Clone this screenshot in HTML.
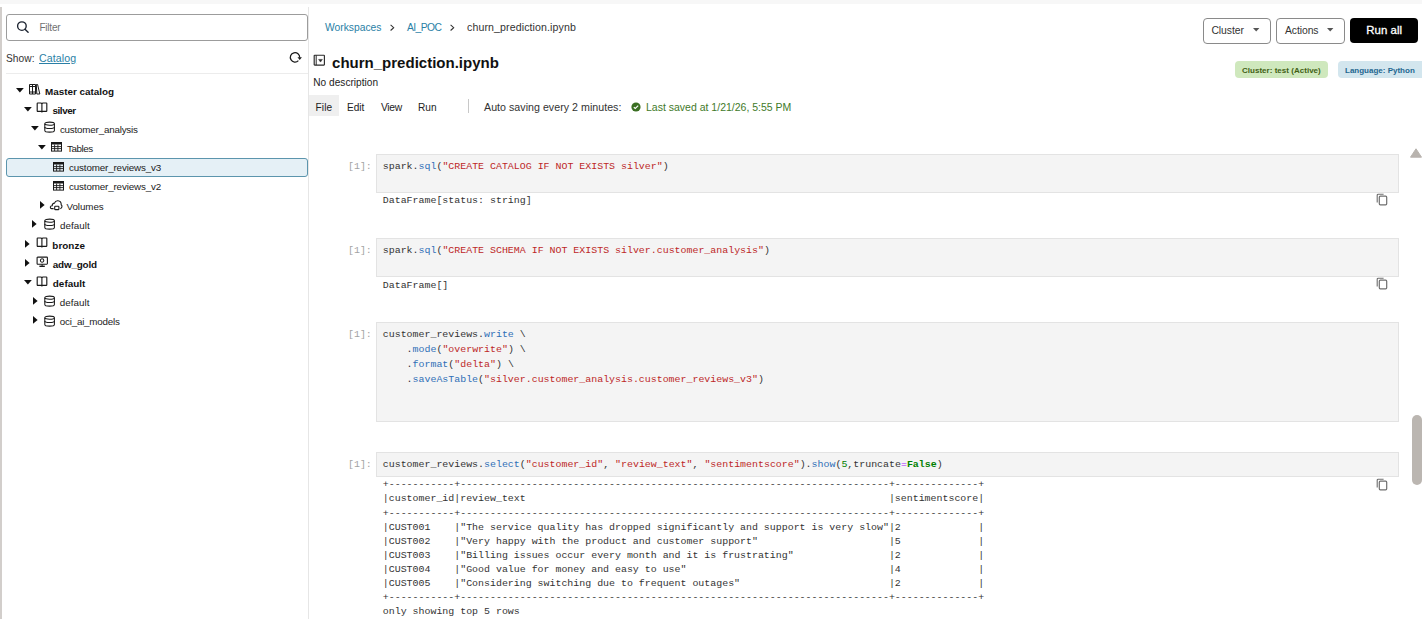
<!DOCTYPE html>
<html><head><meta charset="utf-8"><style>
html,body{margin:0;padding:0;background:#fff;width:1422px;height:627px;overflow:hidden;position:relative}
.t{position:absolute;font-family:"Liberation Sans",sans-serif;line-height:1;white-space:pre}
.m{position:absolute;font-family:"Liberation Mono",monospace;font-size:9.93px;white-space:pre;color:#333}
.s{color:#bd2727}
.f{color:#2f6fb7}
.p{color:#aa22ff}
.g{color:#008000}
.gb{color:#008000;font-weight:bold}
svg{display:block}
</style></head><body>
<div style="position:absolute;left:0;top:0;width:1422px;height:4px;background:#f7f7f7"></div>
<div style="position:absolute;left:0;top:7px;width:2px;height:612px;background:#d2cecb"></div>
<div style="position:absolute;left:308px;top:7px;width:1px;height:612px;background:#e6e6e6"></div>
<div style="position:absolute;left:6px;top:14px;width:300px;height:25px;border:1px solid #9c9c9c;border-radius:3px;box-sizing:content-box"></div>
<svg style="position:absolute;left:15px;top:20px" width="16" height="15" viewBox="0 0 16 15"><circle cx="6.9" cy="6.1" r="4.3" fill="none" stroke="#1c2330" stroke-width="1.35"/><path d="M10 9.3 L13.1 12.3" stroke="#1c2330" stroke-width="1.4" stroke-linecap="round"/></svg>
<div id="t0" class="t" style="left:39.40px;top:23.04px;font-size:10.000px;letter-spacing:-0.204px;color:#707070;font-weight:normal;">Filter</div>
<div id="t1" class="t" style="left:6.00px;top:53.67px;font-size:10.200px;letter-spacing:0.066px;color:#333;font-weight:normal;">Show:</div>
<div id="t2" class="t" style="left:39.00px;top:53.33px;font-size:10.600px;letter-spacing:0.084px;color:#2a7fa6;font-weight:normal;text-decoration:underline;text-underline-offset:1px">Catalog</div>
<svg style="position:absolute;left:288px;top:50px" width="15" height="15" viewBox="0 0 15 15"><path d="M10.4 10.6A4.7 4.7 0 1 1 11.7 7.6" fill="none" stroke="#1a1a1a" stroke-width="1.25"/><path d="M9.5 7.2H13.9L11.7 10Z" fill="#1a1a1a"/></svg>
<div style="position:absolute;left:6px;top:73px;width:302px;height:1px;background:#ececec"></div>
<div style="position:absolute;left:6px;top:157.5px;width:300px;height:17px;border:1px solid #5c95ad;border-radius:3px;background:#e5f0f6"></div>
<svg style="position:absolute;left:16px;top:87.7px" width="8" height="5" viewBox="0 0 8 5"><path d="M0 0H7.8L3.9 4.5Z" fill="#111"/></svg>
<div style="position:absolute;left:29px;top:83px;line-height:0"><svg width="12" height="12" viewBox="0 0 12 12"><path d="M0.5 1.5H6.5V11H0.5Z M3.5 1.5V11 M0.5 3.5H6.5 M0.5 9H6.5" fill="none" stroke="#1a1a1a" stroke-width="1"/><path d="M7.3 1.5H8.6L10.8 11H7.8Z" fill="none" stroke="#1a1a1a" stroke-width="1" stroke-linejoin="round"/></svg></div>
<div id="t3" class="t" style="left:45.00px;top:86.62px;font-size:9.900px;letter-spacing:0.000px;color:#111;font-weight:bold;">Master catalog</div>
<svg style="position:absolute;left:24px;top:106.8px" width="8" height="5" viewBox="0 0 8 5"><path d="M0 0H7.8L3.9 4.5Z" fill="#111"/></svg>
<div style="position:absolute;left:35.6px;top:102.2px;line-height:0"><svg width="12" height="12" viewBox="0 0 12 12"><path d="M1.2 1.6Q1.2 1 1.8 1H4.6Q5.8 1 5.9 1.9Q6 1 7.2 1H10.2Q10.8 1 10.8 1.6V8.8Q10.8 9.4 10.2 9.4H1.8Q1.2 9.4 1.2 8.8Z" fill="none" stroke="#1a1a1a" stroke-width="1.15"/><path d="M5.9 1.9V10.6" stroke="#1a1a1a" stroke-width="1.15"/></svg></div>
<div id="t4" class="t" style="left:52.40px;top:105.72px;font-size:9.900px;letter-spacing:-0.408px;color:#111;font-weight:bold;">silver</div>
<svg style="position:absolute;left:31px;top:125.50000000000001px" width="8" height="5" viewBox="0 0 8 5"><path d="M0 0H7.8L3.9 4.5Z" fill="#111"/></svg>
<div style="position:absolute;left:43.6px;top:120.6px;line-height:0"><svg width="12" height="12" viewBox="0 0 12 12"><ellipse cx="5.6" cy="2.7" rx="4.8" ry="1.6" fill="none" stroke="#1a1a1a" stroke-width="1.05"/><path d="M0.8 2.7V9.4C0.8 10.4 3 11.1 5.6 11.1C8.2 11.1 10.4 10.4 10.4 9.4V2.7" fill="none" stroke="#1a1a1a" stroke-width="1.05"/><path d="M0.8 5.9C0.8 6.8 3 7.4 5.6 7.4C8.2 7.4 10.4 6.8 10.4 5.9" fill="none" stroke="#1a1a1a" stroke-width="1.05"/></svg></div>
<div id="t5" class="t" style="left:59.90px;top:124.50px;font-size:9.800px;letter-spacing:-0.193px;color:#222;font-weight:normal;">customer_analysis</div>
<svg style="position:absolute;left:37.8px;top:144.6px" width="8" height="5" viewBox="0 0 8 5"><path d="M0 0H7.8L3.9 4.5Z" fill="#111"/></svg>
<div style="position:absolute;left:51px;top:142px;line-height:0"><svg width="11" height="10" viewBox="0 0 11 10"><rect x="0.5" y="0.5" width="10" height="8.6" fill="none" stroke="#1a1a1a" stroke-width="1"/><rect x="0.5" y="0.5" width="10" height="2" fill="#1a1a1a"/><path d="M0.5 4.6H10.5M0.5 6.6H10.5M3.6 2.5V9M6.9 2.5V9" stroke="#1a1a1a" stroke-width="0.9"/></svg></div>
<div id="t6" class="t" style="left:66.90px;top:143.60px;font-size:9.800px;letter-spacing:-0.412px;color:#222;font-weight:normal;">Tables</div>
<div style="position:absolute;left:53px;top:162px;line-height:0"><svg width="11" height="10" viewBox="0 0 11 10"><rect x="0.5" y="0.5" width="10" height="8.6" fill="none" stroke="#1a1a1a" stroke-width="1"/><rect x="0.5" y="0.5" width="10" height="2" fill="#1a1a1a"/><path d="M0.5 4.6H10.5M0.5 6.6H10.5M3.6 2.5V9M6.9 2.5V9" stroke="#1a1a1a" stroke-width="0.9"/></svg></div>
<div id="t7" class="t" style="left:69.00px;top:163.00px;font-size:9.800px;letter-spacing:-0.140px;color:#222;font-weight:normal;">customer_reviews_v3</div>
<div style="position:absolute;left:53px;top:181.2px;line-height:0"><svg width="11" height="10" viewBox="0 0 11 10"><rect x="0.5" y="0.5" width="10" height="8.6" fill="none" stroke="#1a1a1a" stroke-width="1"/><rect x="0.5" y="0.5" width="10" height="2" fill="#1a1a1a"/><path d="M0.5 4.6H10.5M0.5 6.6H10.5M3.6 2.5V9M6.9 2.5V9" stroke="#1a1a1a" stroke-width="0.9"/></svg></div>
<div id="t8" class="t" style="left:69.00px;top:182.20px;font-size:9.800px;letter-spacing:-0.140px;color:#222;font-weight:normal;">customer_reviews_v2</div>
<svg style="position:absolute;left:39.6px;top:201.4px" width="5" height="8" viewBox="0 0 5 8"><path d="M0 0V7.8L4.6 3.9Z" fill="#111"/></svg>
<div style="position:absolute;left:48px;top:197px;line-height:0"><svg width="16" height="15" viewBox="0 0 16 15"><path d="M5.6 11.6H3.6C2.7 11.6 2.2 10.8 2.4 10C2.6 9.1 3.4 8.6 4.2 8.7C4.2 7.3 5.2 6.2 6.5 6.1C7 4.5 8.4 3.6 9.9 3.7C11.9 3.9 13.3 5.6 13.2 7.7C14 8.3 14.2 9.4 13.8 10.3C13.5 11 13 11.5 12.3 11.7" fill="none" stroke="#1a1a1a" stroke-width="1.1"/><rect x="6.7" y="9.3" width="4.2" height="3.3" rx="0.7" fill="none" stroke="#1a1a1a" stroke-width="1.1"/></svg></div>
<div id="t9" class="t" style="left:66.60px;top:202.00px;font-size:9.800px;letter-spacing:-0.088px;color:#222;font-weight:normal;">Volumes</div>
<svg style="position:absolute;left:32.3px;top:220.4px" width="5" height="8" viewBox="0 0 5 8"><path d="M0 0V7.8L4.6 3.9Z" fill="#111"/></svg>
<div style="position:absolute;left:43.6px;top:218.2px;line-height:0"><svg width="12" height="12" viewBox="0 0 12 12"><ellipse cx="5.6" cy="2.7" rx="4.8" ry="1.6" fill="none" stroke="#1a1a1a" stroke-width="1.05"/><path d="M0.8 2.7V9.4C0.8 10.4 3 11.1 5.6 11.1C8.2 11.1 10.4 10.4 10.4 9.4V2.7" fill="none" stroke="#1a1a1a" stroke-width="1.05"/><path d="M0.8 5.9C0.8 6.8 3 7.4 5.6 7.4C8.2 7.4 10.4 6.8 10.4 5.9" fill="none" stroke="#1a1a1a" stroke-width="1.05"/></svg></div>
<div id="t10" class="t" style="left:59.90px;top:221.00px;font-size:9.800px;letter-spacing:0.087px;color:#222;font-weight:normal;">default</div>
<svg style="position:absolute;left:25.4px;top:240.0px" width="5" height="8" viewBox="0 0 5 8"><path d="M0 0V7.8L4.6 3.9Z" fill="#111"/></svg>
<div style="position:absolute;left:35.6px;top:236.8px;line-height:0"><svg width="12" height="12" viewBox="0 0 12 12"><path d="M1.2 1.6Q1.2 1 1.8 1H4.6Q5.8 1 5.9 1.9Q6 1 7.2 1H10.2Q10.8 1 10.8 1.6V8.8Q10.8 9.4 10.2 9.4H1.8Q1.2 9.4 1.2 8.8Z" fill="none" stroke="#1a1a1a" stroke-width="1.15"/><path d="M5.9 1.9V10.6" stroke="#1a1a1a" stroke-width="1.15"/></svg></div>
<div id="t11" class="t" style="left:52.30px;top:240.52px;font-size:9.900px;letter-spacing:0.048px;color:#111;font-weight:bold;">bronze</div>
<svg style="position:absolute;left:25.4px;top:259.3px" width="5" height="8" viewBox="0 0 5 8"><path d="M0 0V7.8L4.6 3.9Z" fill="#111"/></svg>
<div style="position:absolute;left:35.6px;top:256.2px;line-height:0"><svg width="12" height="12" viewBox="0 0 12 12"><rect x="1.1" y="1.1" width="10.3" height="7.1" rx="0.6" fill="none" stroke="#1a1a1a" stroke-width="1.1"/><circle cx="6.1" cy="4.5" r="1.7" fill="none" stroke="#1a1a1a" stroke-width="1.05"/><path d="M6.1 8.2V10" stroke="#1a1a1a" stroke-width="1"/><rect x="3.4" y="9.6" width="5.4" height="1.4" fill="#1a1a1a"/></svg></div>
<div id="t12" class="t" style="left:52.80px;top:259.82px;font-size:9.900px;letter-spacing:-0.183px;color:#111;font-weight:bold;">adw_gold</div>
<svg style="position:absolute;left:24px;top:280.2px" width="8" height="5" viewBox="0 0 8 5"><path d="M0 0H7.8L3.9 4.5Z" fill="#111"/></svg>
<div style="position:absolute;left:35.6px;top:275.6px;line-height:0"><svg width="12" height="12" viewBox="0 0 12 12"><path d="M1.2 1.6Q1.2 1 1.8 1H4.6Q5.8 1 5.9 1.9Q6 1 7.2 1H10.2Q10.8 1 10.8 1.6V8.8Q10.8 9.4 10.2 9.4H1.8Q1.2 9.4 1.2 8.8Z" fill="none" stroke="#1a1a1a" stroke-width="1.15"/><path d="M5.9 1.9V10.6" stroke="#1a1a1a" stroke-width="1.15"/></svg></div>
<div id="t13" class="t" style="left:52.80px;top:279.12px;font-size:9.900px;letter-spacing:0.039px;color:#111;font-weight:bold;">default</div>
<svg style="position:absolute;left:32.5px;top:297.0px" width="5" height="8" viewBox="0 0 5 8"><path d="M0 0V7.8L4.6 3.9Z" fill="#111"/></svg>
<div style="position:absolute;left:43.6px;top:295px;line-height:0"><svg width="12" height="12" viewBox="0 0 12 12"><ellipse cx="5.6" cy="2.7" rx="4.8" ry="1.6" fill="none" stroke="#1a1a1a" stroke-width="1.05"/><path d="M0.8 2.7V9.4C0.8 10.4 3 11.1 5.6 11.1C8.2 11.1 10.4 10.4 10.4 9.4V2.7" fill="none" stroke="#1a1a1a" stroke-width="1.05"/><path d="M0.8 5.9C0.8 6.8 3 7.4 5.6 7.4C8.2 7.4 10.4 6.8 10.4 5.9" fill="none" stroke="#1a1a1a" stroke-width="1.05"/></svg></div>
<div id="t14" class="t" style="left:59.80px;top:297.60px;font-size:9.800px;letter-spacing:0.039px;color:#222;font-weight:normal;">default</div>
<svg style="position:absolute;left:32.5px;top:316.3px" width="5" height="8" viewBox="0 0 5 8"><path d="M0 0V7.8L4.6 3.9Z" fill="#111"/></svg>
<div style="position:absolute;left:43.6px;top:314.6px;line-height:0"><svg width="12" height="12" viewBox="0 0 12 12"><ellipse cx="5.6" cy="2.7" rx="4.8" ry="1.6" fill="none" stroke="#1a1a1a" stroke-width="1.05"/><path d="M0.8 2.7V9.4C0.8 10.4 3 11.1 5.6 11.1C8.2 11.1 10.4 10.4 10.4 9.4V2.7" fill="none" stroke="#1a1a1a" stroke-width="1.05"/><path d="M0.8 5.9C0.8 6.8 3 7.4 5.6 7.4C8.2 7.4 10.4 6.8 10.4 5.9" fill="none" stroke="#1a1a1a" stroke-width="1.05"/></svg></div>
<div id="t15" class="t" style="left:59.80px;top:316.90px;font-size:9.800px;letter-spacing:-0.212px;color:#222;font-weight:normal;">oci_ai_models</div>
<div id="t16" class="t" style="left:325.00px;top:22.68px;font-size:10.300px;letter-spacing:0.000px;color:#2a7fa6;font-weight:normal;">Workspaces</div>
<svg style="position:absolute;left:389px;top:23px" width="7" height="9" viewBox="0 0 7 9"><path d="M1.6 1.9L4.7 4.7L1.6 7.5" fill="none" stroke="#333" stroke-width="1.05"/></svg>
<div id="t17" class="t" style="left:407.00px;top:22.68px;font-size:10.300px;letter-spacing:-0.560px;color:#2a7fa6;font-weight:normal;">AI_POC</div>
<svg style="position:absolute;left:449px;top:23px" width="7" height="9" viewBox="0 0 7 9"><path d="M1.6 1.9L4.7 4.7L1.6 7.5" fill="none" stroke="#333" stroke-width="1.05"/></svg>
<div id="t18" class="t" style="left:467.00px;top:22.43px;font-size:10.600px;letter-spacing:0.108px;color:#333;font-weight:normal;">churn_prediction.ipynb</div>
<svg style="position:absolute;left:313px;top:54.4px" width="12" height="12" viewBox="0 0 12 12"><rect x="1.2" y="1.2" width="10.2" height="9.9" rx="0.5" fill="none" stroke="#2a2a2a" stroke-width="1.15"/><path d="M3.2 1.2V11.1" stroke="#2a2a2a" stroke-width="1"/><path d="M5.6 5.4H9.4L7.5 8.1Z" fill="#2a2a2a" stroke="#2a2a2a" stroke-width="0.5" stroke-linejoin="round"/></svg>
<div id="t19" class="t" style="left:332.10px;top:55.20px;font-size:15.000px;letter-spacing:0.002px;color:#111;font-weight:bold;">churn_prediction.ipynb</div>
<div id="t20" class="t" style="left:313.30px;top:77.85px;font-size:10.100px;letter-spacing:0.018px;color:#222;font-weight:normal;">No description</div>
<div style="position:absolute;left:309px;top:95px;width:30px;height:21px;background:#efefef"></div>
<div id="t21" class="t" style="left:315.40px;top:102.75px;font-size:10.100px;letter-spacing:0.172px;color:#222;font-weight:normal;">File</div>
<div id="t22" class="t" style="left:347.00px;top:102.75px;font-size:10.100px;letter-spacing:0.000px;color:#222;font-weight:normal;">Edit</div>
<div id="t23" class="t" style="left:380.90px;top:102.58px;font-size:10.300px;letter-spacing:-0.260px;color:#222;font-weight:normal;">View</div>
<div id="t24" class="t" style="left:417.90px;top:102.75px;font-size:10.100px;letter-spacing:0.140px;color:#222;font-weight:normal;">Run</div>
<div style="position:absolute;left:468px;top:99px;width:1px;height:14px;background:#c8c8c8"></div>
<div id="t25" class="t" style="left:484.00px;top:102.28px;font-size:10.650px;letter-spacing:0.029px;color:#333;font-weight:normal;">Auto saving every 2 minutes:</div>
<svg style="position:absolute;left:631.2px;top:102px" width="10" height="10" viewBox="0 0 10 10"><circle cx="5" cy="5" r="4.6" fill="#3a6e22"/><path d="M2.8 5.2L4.3 6.5L7.2 3.7" fill="none" stroke="#fff" stroke-width="1.15"/></svg>
<div id="t26" class="t" style="left:646.00px;top:102.41px;font-size:10.500px;letter-spacing:0.000px;color:#3f7a2a;font-weight:normal;">Last saved at 1/21/26, 5:55 PM</div>
<div style="position:absolute;left:1203px;top:18px;width:66px;height:23.6px;border:1px solid #8a8a8a;border-radius:4px"></div>
<div id="t27" class="t" style="left:1211.40px;top:26.20px;font-size:10.400px;letter-spacing:-0.047px;color:#333;font-weight:normal;">Cluster</div>
<svg style="position:absolute;left:1253px;top:28px" width="7" height="4" viewBox="0 0 7 4"><path d="M0 0H6.4L3.2 3.4Z" fill="#555"/></svg>
<div style="position:absolute;left:1276px;top:18px;width:67px;height:23.6px;border:1px solid #8a8a8a;border-radius:4px"></div>
<div id="t28" class="t" style="left:1285.00px;top:26.20px;font-size:10.400px;letter-spacing:-0.084px;color:#333;font-weight:normal;">Actions</div>
<svg style="position:absolute;left:1327px;top:28px" width="7" height="4" viewBox="0 0 7 4"><path d="M0 0H6.4L3.2 3.4Z" fill="#555"/></svg>
<div style="position:absolute;left:1350px;top:18px;width:68px;height:25px;background:#000;border-radius:4px"></div>
<div id="t29" class="t" style="left:1366.30px;top:25.31px;font-size:11.450px;letter-spacing:0.039px;color:#fff;font-weight:normal;-webkit-text-stroke:0.3px #fff">Run all</div>
<div style="position:absolute;left:1235px;top:61px;width:92.5px;height:16.5px;background:#cfe8bd;border-radius:4px"></div>
<div id="t30" class="t" style="left:1242.00px;top:66.53px;font-size:8.000px;letter-spacing:0.024px;color:#3f5f14;font-weight:bold;">Cluster: test (Active)</div>
<div style="position:absolute;left:1337.7px;top:61px;width:90px;height:16.5px;background:#d3e6ee;border-radius:4px"></div>
<div id="t31" class="t" style="left:1345.00px;top:66.53px;font-size:8.000px;letter-spacing:0.000px;color:#1f6690;font-weight:bold;">Language: Python</div>
<div style="position:absolute;left:376px;top:154px;width:1021px;height:37px;background:#f4f4f4;border:1px solid #e3e3e3"></div>
<div class="m" style="left:348px;top:158.70px;line-height:15.3px;color:#a3a3a3">[1]:</div>
<div class="m" style="left:382.8px;top:158.70px;line-height:15.3px">spark.<span class="f">sql</span>(<span class="s">"CREATE CATALOG IF NOT EXISTS silver"</span>)</div>
<div class="m" style="left:382.8px;top:193.40px;line-height:15.3px">DataFrame[status: string]</div>
<svg style="position:absolute;left:1376px;top:192.5px" width="13" height="13" viewBox="0 0 13 13"><path d="M1.2 9.6V2.2C1.2 1.6 1.6 1.2 2.2 1.2H7.6" fill="none" stroke="#6f6f6f" stroke-width="1.1"/><rect x="3.3" y="3.2" width="7.4" height="8.6" rx="1" fill="none" stroke="#6f6f6f" stroke-width="1.2"/></svg>
<div style="position:absolute;left:376px;top:238px;width:1021px;height:37px;background:#f4f4f4;border:1px solid #e3e3e3"></div>
<div class="m" style="left:348px;top:242.80px;line-height:15.3px;color:#a3a3a3">[1]:</div>
<div class="m" style="left:382.8px;top:242.80px;line-height:15.3px">spark.<span class="f">sql</span>(<span class="s">"CREATE SCHEMA IF NOT EXISTS silver.customer_analysis"</span>)</div>
<div class="m" style="left:382.8px;top:277.50px;line-height:15.3px">DataFrame[]</div>
<svg style="position:absolute;left:1376px;top:276.5px" width="13" height="13" viewBox="0 0 13 13"><path d="M1.2 9.6V2.2C1.2 1.6 1.6 1.2 2.2 1.2H7.6" fill="none" stroke="#6f6f6f" stroke-width="1.1"/><rect x="3.3" y="3.2" width="7.4" height="8.6" rx="1" fill="none" stroke="#6f6f6f" stroke-width="1.2"/></svg>
<div style="position:absolute;left:376px;top:322px;width:1021px;height:97.5px;background:#f4f4f4;border:1px solid #e3e3e3"></div>
<div class="m" style="left:348px;top:326.50px;line-height:15.3px;color:#a3a3a3">[1]:</div>
<div class="m" style="left:382.8px;top:326.50px;line-height:15.3px">customer_reviews.<span class="f">write</span> \</div>
<div class="m" style="left:382.8px;top:341.80px;line-height:15.3px">    .<span class="f">mode</span>(<span class="s">"overwrite"</span>) \</div>
<div class="m" style="left:382.8px;top:357.10px;line-height:15.3px">    .<span class="f">format</span>(<span class="s">"delta"</span>) \</div>
<div class="m" style="left:382.8px;top:372.40px;line-height:15.3px">    .<span class="f">saveAsTable</span>(<span class="s">"silver.customer_analysis.customer_reviews_v3"</span>)</div>
<div style="position:absolute;left:376px;top:452.4px;width:1021px;height:22.600000000000023px;background:#f4f4f4;border:1px solid #e3e3e3"></div>
<div class="m" style="left:348px;top:456.80px;line-height:15.3px;color:#a3a3a3">[1]:</div>
<div class="m" style="left:382.8px;top:456.80px;line-height:15.3px">customer_reviews.<span class="f">select</span>(<span class="s">"customer_id"</span>, <span class="s">"review_text"</span>, <span class="s">"sentimentscore"</span>).<span class="f">show</span>(<span class="g">5</span>,truncate<span class="p">=</span><span class="gb">False</span>)</div>
<svg style="position:absolute;left:1376px;top:477.5px" width="13" height="13" viewBox="0 0 13 13"><path d="M1.2 9.6V2.2C1.2 1.6 1.6 1.2 2.2 1.2H7.6" fill="none" stroke="#6f6f6f" stroke-width="1.1"/><rect x="3.3" y="3.2" width="7.4" height="8.6" rx="1" fill="none" stroke="#6f6f6f" stroke-width="1.2"/></svg>
<div class="m" style="left:382.8px;top:478.30px;line-height:14.1px">+-----------+------------------------------------------------------------------------+--------------+</div>
<div class="m" style="left:382.8px;top:492.40px;line-height:14.1px">|customer_id|review_text                                                             |sentimentscore|</div>
<div class="m" style="left:382.8px;top:506.50px;line-height:14.1px">+-----------+------------------------------------------------------------------------+--------------+</div>
<div class="m" style="left:382.8px;top:520.60px;line-height:14.1px">|CUST001    |"The service quality has dropped significantly and support is very slow"|2             |</div>
<div class="m" style="left:382.8px;top:534.70px;line-height:14.1px">|CUST002    |"Very happy with the product and customer support"                      |5             |</div>
<div class="m" style="left:382.8px;top:548.80px;line-height:14.1px">|CUST003    |"Billing issues occur every month and it is frustrating"                |2             |</div>
<div class="m" style="left:382.8px;top:562.90px;line-height:14.1px">|CUST004    |"Good value for money and easy to use"                                  |4             |</div>
<div class="m" style="left:382.8px;top:577.00px;line-height:14.1px">|CUST005    |"Considering switching due to frequent outages"                         |2             |</div>
<div class="m" style="left:382.8px;top:591.10px;line-height:14.1px">+-----------+------------------------------------------------------------------------+--------------+</div>
<div class="m" style="left:382.8px;top:605.20px;line-height:14.1px">only showing top 5 rows</div>
<svg style="position:absolute;left:1410px;top:148px" width="12" height="10" viewBox="0 0 12 10"><path d="M6 0.8L11.5 9.2H0.5Z" fill="#b8b3ae" stroke="#b8b3ae" stroke-width="1" stroke-linejoin="round"/></svg>
<div style="position:absolute;left:1412px;top:415px;width:10px;height:70px;background:#bbb6b1;border-radius:5px"></div>
</body></html>
